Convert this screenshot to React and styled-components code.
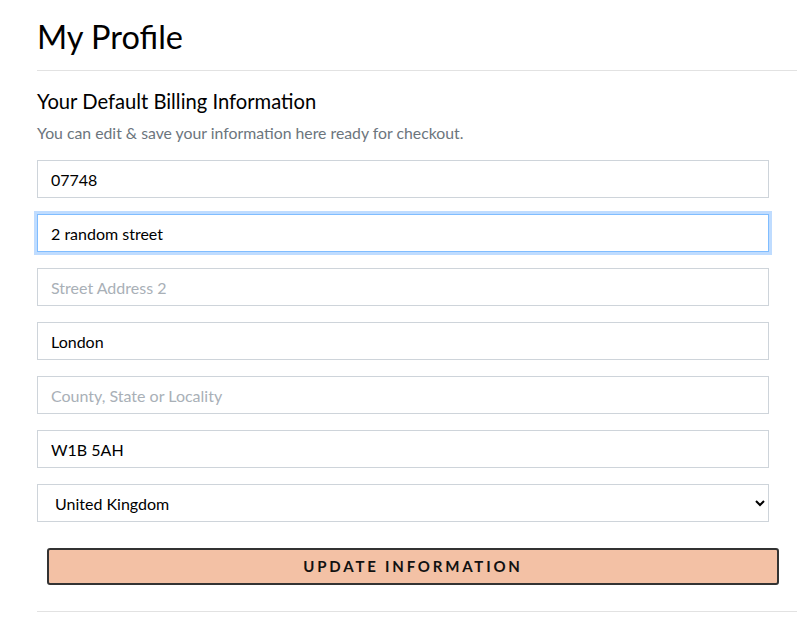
import React from 'react'
import styled, { createGlobalStyle } from 'styled-components'

const GlobalStyle = createGlobalStyle`
  html, body {
    margin: 0;
    padding: 0;
    background: #fff;
    overflow: hidden;
  }
  body {
    font-family: Lato, 'Liberation Sans', sans-serif;
    color: #212529;
  }
`

const fields = [
  { value: '07748', placeholder: 'Phone Number' },
  { value: '2 random street', placeholder: 'Street Address 1', focused: true },
  { value: '', placeholder: 'Street Address 2' },
  { value: 'London', placeholder: 'Town or City' },
  { value: '', placeholder: 'County, State or Locality' },
  { value: 'W1B 5AH', placeholder: 'Postcode' },
]

export default function App() {
  return (
    <>
      <GlobalStyle />
      <Page>
        <Title>My Profile</Title>
        <Rule />
        <Section>
          <Heading>Your Default Billing Information</Heading>
          <Lead>You can edit &amp; save your information here ready for checkout.</Lead>
          <Form onSubmit={e => e.preventDefault()}>
            {fields.map(f => (
              <Input
                key={f.placeholder}
                defaultValue={f.value}
                placeholder={f.placeholder}
                $focused={f.focused}
              />
            ))}
            <Select defaultValue="GB">
              <option value="GB">United Kingdom</option>
              <option value="US">United States</option>
            </Select>
            <Button type="submit">Update Information</Button>
          </Form>
        </Section>
        <Rule $bottom />
      </Page>
    </>
  )
}

const Page = styled.main`
  padding: 18px 0 0 37px;
  width: 760px;
`
const Title = styled.h1`
  margin: 0;
  font-size: 32.5px;
  font-weight: 400;
  line-height: 38px;
  color: #000;
`
const Rule = styled.hr`
  border: 0;
  border-top: 1px solid #e2e2e2;
  margin: ${props => (props.$bottom ? '26px 0 0' : '14px 0 0')};
`
const Section = styled.section`
  padding-top: 18px;
`
const Heading = styled.h2`
  margin: 0;
  font-size: 20.2px;
  font-weight: 400;
  line-height: 24px;
  color: #000;
`
const Lead = styled.p`
  margin: 10px 0 0;
  font-size: 15.8px;
  line-height: 20px;
  color: #6c757d;
`
const Form = styled.form`
  display: flex;
  flex-direction: column;
  gap: 16px;
  width: 732px;
  margin-top: 17px;
`
const fieldBase = `
  box-sizing: border-box;
  height: 38px;
  width: 100%;
  padding: 0 13px;
  font-family: Lato, 'Liberation Sans', sans-serif;
  font-size: 16px;
  color: #000;
  background: #fff;
  border: 1px solid #ced4da;
  border-radius: 0;
  outline: none;
`
const Input = styled.input`
  ${fieldBase}
  border-color: ${props => (props.$focused ? '#80bdff' : '#ced4da')};
  box-shadow: ${props => (props.$focused ? '0 0 0 3px #bfdcff' : 'none')};
  &::placeholder {
    color: #a9b0b7;
  }
`
const Select = styled.select`
  ${fieldBase}
  padding: 0 13px;
`
const Button = styled.button`
  box-sizing: border-box;
  margin: 10px 0 0 10px;
  width: 732px;
  height: 37px;
  padding-bottom: 2px;
  background: #f3c1a5;
  border: 2px solid #333;
  border-radius: 3px;
  font-family: Lato, 'Liberation Sans', sans-serif;
  font-size: 15px;
  font-weight: 700;
  letter-spacing: 2.8px;
  text-transform: uppercase;
  color: #111;
  cursor: pointer;
`
